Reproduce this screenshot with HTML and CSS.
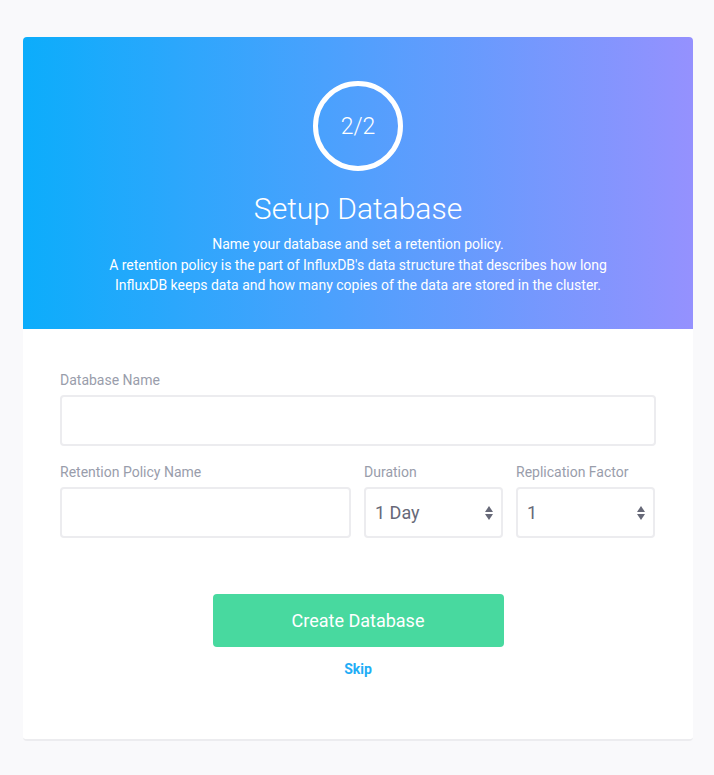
FILE: index.html
```html
<!DOCTYPE html>
<html>
<head>
<meta charset="utf-8">
<link rel="stylesheet" href="styles.css">
</head>
<body>
<div class="page">
  <div class="card">
    <div class="hero">
      <div class="step">2/2</div>
      <h1 class="title">Setup Database</h1>
      <p class="desc">Name your database and set a retention policy.<br>A retention policy is the part of InfluxDB's data structure that describes how long<br>InfluxDB keeps data and how many copies of the data are stored in the cluster.</p>
    </div>
    <div class="body">
      <div class="field">
        <label class="label">Database Name</label>
        <div class="input"></div>
      </div>
      <div class="row">
        <div class="field">
          <label class="label">Retention Policy Name</label>
          <div class="input"></div>
        </div>
        <div class="field">
          <label class="label">Duration</label>
          <div class="input select"><span>1 Day</span><span class="arrows"><i class="up"></i><i class="down"></i></span></div>
        </div>
        <div class="field">
          <label class="label">Replication Factor</label>
          <div class="input select"><span>1</span><span class="arrows"><i class="up"></i><i class="down"></i></span></div>
        </div>
      </div>
      <div class="actions">
        <button class="btn">Create Database</button>
        <a class="skip">Skip</a>
      </div>
    </div>
  </div>
</div>
</body>
</html>
```
FILE: styles.css
```css
html, body {
  margin: 0;
  padding: 0;
  background: #f9f9fb;
  font-family: Roboto, "Liberation Sans", sans-serif;
}
.page {
  padding: 37px 21px 0 23px;
}
.card {
  width: 670px;
  background: #fff;
  border-radius: 4px;
  border-bottom: 2px solid #ececef;
}
.hero {
  height: 292px;
  box-sizing: border-box;
  border-radius: 4px 4px 0 0;
  background: linear-gradient(to right, #0cadfb 0%, #4aa1fd 45%, #9591fe 100%);
  display: flex;
  flex-direction: column;
  align-items: center;
  padding-top: 44px;
  color: #fff;
}
.step {
  width: 90px;
  height: 90px;
  box-sizing: border-box;
  border: 5px solid #fff;
  border-radius: 50%;
  display: flex;
  align-items: center;
  justify-content: center;
  font-size: 23px;
  font-weight: 300;
}
.title {
  margin: 19px 0 0;
  font-size: 30px;
  font-weight: 300;
  line-height: 38px;
}
.desc {
  margin: 6px 0 0;
  font-size: 14px;
  line-height: 20.5px;
  text-align: center;
}
.body {
  padding: 43px 37px 62px 37px;
  display: flex;
  flex-direction: column;
}
.field {
  display: flex;
  flex-direction: column;
}
.label {
  font-size: 14px;
  color: #999dab;
  line-height: 16px;
  margin-bottom: 7px;
  padding-left: 0;
}
.input {
  height: 51px;
  box-sizing: border-box;
  border: 2px solid #ececef;
  border-radius: 4px;
  background: #fff;
}
.row {
  display: grid;
  grid-template-columns: 291px 139px 139px;
  column-gap: 13px;
  margin-top: 18px;
}
.select {
  display: flex;
  align-items: center;
  justify-content: space-between;
  padding: 0 8px 0 9px;
  font-size: 18px;
  color: #676978;
}
.arrows {
  display: flex;
  flex-direction: column;
  gap: 2px;
}
.arrows i {
  display: block;
  width: 0;
  height: 0;
  border-left: 4px solid transparent;
  border-right: 4px solid transparent;
}
.arrows .up { border-bottom: 6px solid #676978; }
.arrows .down { border-top: 6px solid #676978; }
.actions {
  display: flex;
  flex-direction: column;
  align-items: center;
  margin-top: 56px;
}
.btn {
  width: 291px;
  height: 53px;
  border: none;
  border-radius: 4px;
  background: #48d99f;
  color: #fff;
  font-family: Roboto, "Liberation Sans", sans-serif;
  font-size: 18px;
  font-weight: 400;
  padding: 0;
}
.skip {
  margin-top: 14px;
  font-size: 14px;
  font-weight: 700;
  color: #22adf6;
  line-height: 16px;
}
```
